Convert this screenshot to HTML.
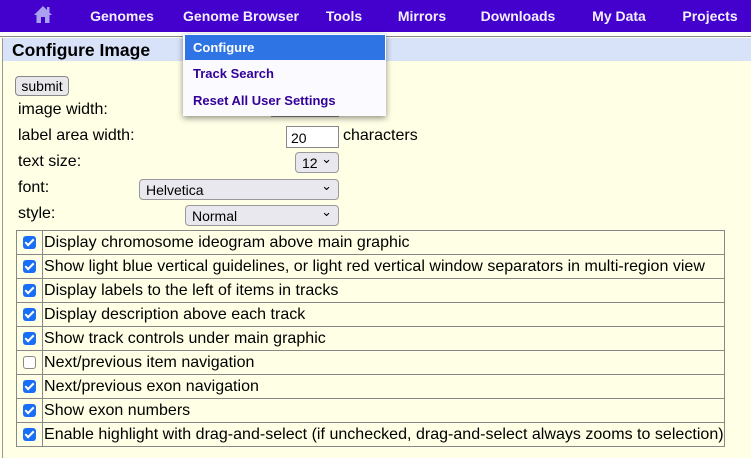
<!DOCTYPE html>
<html><head><style>
*{margin:0;padding:0;box-sizing:border-box}
body{width:751px;height:451px;overflow:hidden;background:#ffffe6;font-family:"Liberation Sans",Arial,sans-serif;position:relative}
.nav{position:absolute;left:0;top:0;width:751px;height:32px;background:#4400cc}
.nav span{position:absolute;top:8px;color:#f2f0ff;font-weight:bold;font-size:14px;transform:translateX(-50%);white-space:nowrap}
.gap{position:absolute;top:32px;left:0;width:751px;height:5px;background:#fff;border-bottom:1px solid #888}
.frame{position:absolute;top:38px;left:2px;width:760px;height:420px;border-left:1px solid #999}
.hdr{position:absolute;top:38px;left:3px;width:748px;height:23px;background:#d8e3fa}
.hdr b{position:absolute;left:9px;top:2px;font-size:17.5px;color:#000}
.t{position:absolute;font-size:16px;color:#000;white-space:nowrap}
.sel{position:absolute;height:21px;border:1px solid #999;border-radius:4px;background:#e8e8ee;font-size:14px;padding:2px 0 0 6px}
.sel:after{content:"⌄";position:absolute;right:6px;top:-2px;font-size:13px}
.inp{position:absolute;background:#fff;border:1px solid #888;height:22px;font-size:14px;padding:3px 0 0 4px}
table{position:absolute;left:16px;top:230px;border-collapse:collapse;border:1px solid #777}
td{border:1px solid #888;height:24px;font-size:16px;padding:0 0 0 1px;white-space:nowrap;letter-spacing:0.02px}
td.c{width:26px;padding:0;text-align:center}
.cb{display:inline-block;width:13px;height:13px;border-radius:3px;background:#1a6ef5;vertical-align:middle;position:relative}
.cb:after{content:"";position:absolute;left:4px;top:1px;width:3px;height:7px;border:solid #fff;border-width:0 2px 2px 0;transform:rotate(45deg)}
.cb.off{background:#fff;border:1px solid #888}
.cb.off:after{display:none}
.dd{position:absolute;left:183px;top:34px;width:203px;height:82px;background:#fafaff;box-shadow:0 2px 6px rgba(0,0,0,.45)}
.dd div{position:absolute;left:0;width:203px;font-weight:bold;font-size:13px;color:#330099;padding-left:10px}
</style></head><body>
<div class="nav">
<svg style="position:absolute;left:33px;top:5px" width="20" height="19" viewBox="0 0 20 19"><path d="M10 1 L1 10 L3.5 10 L3.5 18 L8 18 L8 12 L12 12 L12 18 L16.5 18 L16.5 10 L19 10 Z" fill="#a9a0f0"/><rect x="14" y="2" width="2.5" height="5" fill="#a9a0f0"/></svg>
<span style="left:122px">Genomes</span>
<span style="left:241px">Genome Browser</span>
<span style="left:344px">Tools</span>
<span style="left:422px">Mirrors</span>
<span style="left:518px">Downloads</span>
<span style="left:619px">My Data</span>
<span style="left:710px">Projects</span>
</div>
<div class="gap"></div>
<div class="hdr"><b>Configure Image</b></div>
<div class="frame"></div>
<div style="position:absolute;left:15px;top:76px;width:54px;height:20px;border:1px solid #888;border-radius:4px;background:#e8e8ec;font-size:14px;text-align:center;padding-top:1px">submit</div>
<div class="t" style="left:18px;top:101px">image width:</div>
<div class="inp" style="left:271px;top:105px;width:68px;height:12px"></div>
<div class="t" style="left:18px;top:127px">label area width:</div>
<div class="inp" style="left:286px;top:126px;width:53px">20</div>
<div class="t" style="left:343px;top:127px">characters</div>
<div class="t" style="left:18px;top:153px">text size:</div>
<div class="sel" style="left:295px;top:152px;width:44px">12</div>
<div class="t" style="left:18px;top:179px">font:</div>
<div class="sel" style="left:139px;top:179px;width:200px">Helvetica</div>
<div class="t" style="left:18px;top:205px">style:</div>
<div class="sel" style="left:185px;top:205px;width:154px">Normal</div>
<table>
<tr><td class="c"><span class="cb"></span></td><td style="width:681px">Display chromosome ideogram above main graphic</td></tr>
<tr><td class="c"><span class="cb"></span></td><td>Show light blue vertical guidelines, or light red vertical window separators in multi-region view</td></tr>
<tr><td class="c"><span class="cb"></span></td><td>Display labels to the left of items in tracks</td></tr>
<tr><td class="c"><span class="cb"></span></td><td>Display description above each track</td></tr>
<tr><td class="c"><span class="cb"></span></td><td>Show track controls under main graphic</td></tr>
<tr><td class="c"><span class="cb off"></span></td><td>Next/previous item navigation</td></tr>
<tr><td class="c"><span class="cb"></span></td><td>Next/previous exon navigation</td></tr>
<tr><td class="c"><span class="cb"></span></td><td>Show exon numbers</td></tr>
<tr><td class="c"><span class="cb"></span></td><td>Enable highlight with drag-and-select (if unchecked, drag-and-select always zooms to selection)</td></tr>
</table>
<div class="dd">
<div style="top:1px;height:25px;background:#2f74e4;color:#fff;padding-top:5px;left:2px;width:200px;padding-left:8px">Configure</div>
<div style="top:32px">Track Search</div>
<div style="top:59px">Reset All User Settings</div>
</div>
</body></html>
